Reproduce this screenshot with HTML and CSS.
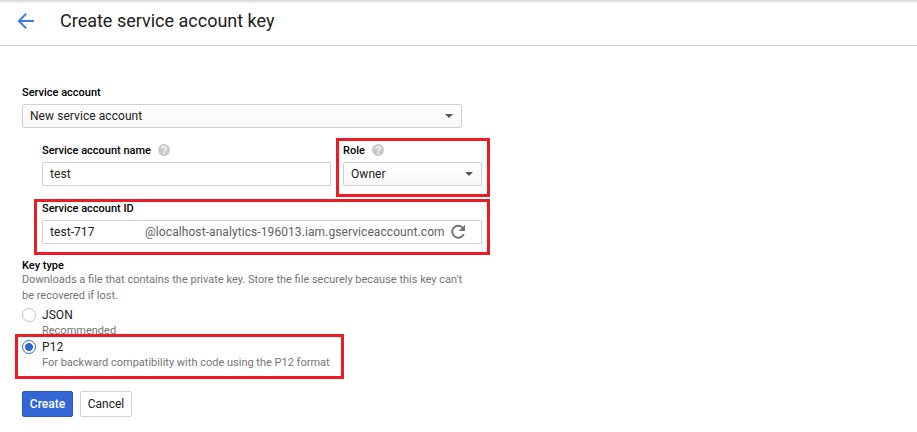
FILE: index.html
```html
<!DOCTYPE html>
<html lang="en">
<head>
<meta charset="utf-8">
<title>Create service account key</title>
<link rel="stylesheet" href="styles.css">
</head>
<body>
<header class="header">
  <svg class="back" width="16" height="16" viewBox="0 0 16 16"><path d="M8.2 .7 .9 8l7.3 7.3M1 8h15" fill="none" stroke="#3b78e7" stroke-width="1.9"/></svg>
  <h1 class="title">Create service account key</h1>
</header>
<main class="form">
  <div class="label">Service account</div>
  <div class="control select"><span class="value">New service account</span><i class="caret"></i></div>
  <div class="nested">
    <div class="columns">
      <div class="field name-field">
        <div class="label"><span class="name-label">Service account name</span><svg class="help" width="12" height="12" viewBox="0 0 12 12"><circle cx="6" cy="6" r="6" fill="#c8c8c8"/><path d="M4 4.7c0-2.9 4.1-2.7 4.1-.1C8.1 6.1 6.1 6 6.1 7.6M6.1 8.5v1.4" fill="none" stroke="#fff" stroke-width="1.4"/></svg></div>
        <div class="control"><span class="value">test</span></div>
      </div>
      <div class="field role-field marked mark-role">
        <div class="label"><span>Role</span><svg class="help" width="12" height="12" viewBox="0 0 12 12"><circle cx="6" cy="6" r="6" fill="#c8c8c8"/><path d="M4 4.7c0-2.9 4.1-2.7 4.1-.1C8.1 6.1 6.1 6 6.1 7.6M6.1 8.5v1.4" fill="none" stroke="#fff" stroke-width="1.4"/></svg></div>
        <div class="control select"><span class="value">Owner</span><i class="caret"></i></div>
      </div>
    </div>
    <div class="field id-field marked mark-id">
      <div class="label">Service account ID</div>
      <div class="control"><span class="value id-value">test-717</span><span class="domain">@localhost-analytics-196013.iam.gserviceaccount.com</span><svg class="refresh" width="16" height="16" viewBox="0 0 16 16"><path d="M13.1 4.2A6.05 6.05 0 1 0 13.8 10" fill="none" stroke="#757575" stroke-width="1.9"/><path d="M15 .8v6.3H8.7z" fill="#757575"/></svg></div>
    </div>
  </div>
  <div class="label key-label">Key type</div>
  <p class="hint">Downloads a file that contains the private key. Store the file securely because this key can't<br>be recovered if lost.</p>
  <div class="option">
    <i class="radio"></i>
    <div><div class="option-name">JSON</div><div class="option-hint">Recommended</div></div>
  </div>
  <div class="option marked mark-p12">
    <i class="radio checked"></i>
    <div><div class="option-name">P12</div><div class="option-hint">For backward compatibility with code using the P12 format</div></div>
  </div>
  <div class="actions"><button class="button primary"><span>Create</span></button><button class="button"><span>Cancel</span></button></div>
</main>
</body>
</html>
```

FILE: styles.css
```css
*, *::after { box-sizing: border-box; }
body { margin: 0; background: #fff; font: 12px/16px Roboto, sans-serif; letter-spacing: .06px; color: #212121; }
.header { height: 46px; display: flex; align-items: center; padding: 0 0 4px 18px; border-bottom: 1px solid #d0d0d0; background: linear-gradient(#d4d4d4, #f0f0f0 2px, #fff 4px); }
.back { display: block; flex: none; }
.title { margin: 0 0 0 26px; font-size: 18px; line-height: 24px; font-weight: 400; letter-spacing: 0; white-space: nowrap; }
.form { width: 440px; margin-left: 22px; padding-top: 38px; }
.label { height: 20px; display: flex; align-items: flex-start; font-size: 11px; line-height: 18px; font-weight: 500; letter-spacing: 0; color: #000; white-space: nowrap; }
.help { display: block; margin: 2px 0 0 7px; }
.control { height: 24px; display: flex; align-items: center; border: 1px solid #d0d0d0; border-radius: 1px; padding: 0 8px 0 7px; background: #fff; }
.select { justify-content: space-between; border-radius: 2px; background: linear-gradient(#fff, #f8f8f8); }
.value { white-space: nowrap; }
.caret { border: 4px solid transparent; border-top-color: #555; border-bottom: 0; }
.nested { width: 440px; margin: 14px 0 0 20px; }
.columns { display: flex; justify-content: space-between; }
.name-field { width: 289px; }
.role-field { width: 139px; }
.id-field { margin-top: 14px; }
.id-value { width: 95px; flex: none; }
.domain { width: 300px; flex: none; color: #616161; letter-spacing: .08px; white-space: nowrap; }
.refresh { display: block; flex: none; margin-left: 5px; }
.marked { position: relative; }
.marked::after { content: ""; position: absolute; border: 3px solid #ed1c24; pointer-events: none; }
.mark-role::after { inset: -4px -8px -11px -7px; }
.mark-id::after { inset: -1px -8px -11px -8px; }
.mark-p12::after { left: -7px; top: -4px; width: 329px; height: 45px; }
.key-label { height: 16px; margin-top: 13px; }
.hint { margin: -1px 0 0; font-size: 11px; line-height: 16px; letter-spacing: 0; color: #757575; white-space: nowrap; }
.option { height: 32px; display: flex; }
.hint + .option { margin-top: 2px; }
.radio { width: 14px; height: 14px; margin: 2px 6px 0 0; border: 1px solid #c4c4c4; border-radius: 50%; background: #fff; flex: none; }
.checked { border-color: #3367d6; background: radial-gradient(circle, #3367d6 3.7px, #fff 4.3px); }
.option-name { height: 16px; line-height: 18px; }
.option-hint { height: 16px; font-size: 11px; line-height: 17px; letter-spacing: 0; color: #757575; white-space: nowrap; }
.actions { display: flex; gap: 7px; margin-top: 21px; }
.button { width: 52px; height: 26px; border: 1px solid #d0d0d0; border-radius: 2px; padding: 0; background: #fff; color: #212121; font: 12px/24px Roboto, sans-serif; text-align: center; }
.primary { width: 51px; border-color: #2a56c6; background: #3367d6; color: #fff; font-weight: 500; }
```
